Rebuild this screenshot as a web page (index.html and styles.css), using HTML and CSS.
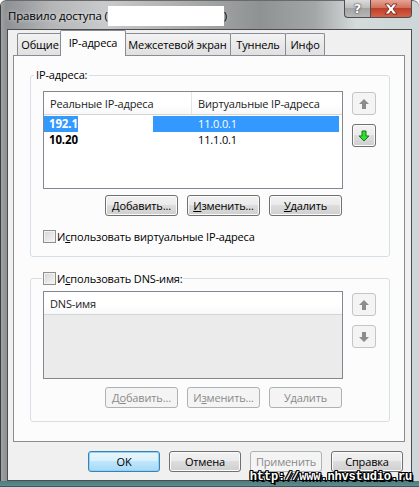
FILE: index.html
```html
<!DOCTYPE html>
<html lang="ru">
<head>
<meta charset="utf-8">
<title>Правило доступа</title>
<link rel="stylesheet" href="styles.css">
</head>
<body>
<div class="window">
  <div class="titlebar">
    <span class="title">Правило доступа (<span class="redact-title"></span>)</span>
    <div class="caption-btns">
      <span class="cap help">?</span>
      <span class="cap close"><svg width="16" height="12" viewBox="0 0 16 12"><path d="M2 1 H6 L8 4 L10 1 H14 L10 6 L14 11 H10 L8 8 L6 11 H2 L6 6 Z" fill="#fff" stroke="#6a1a10" stroke-width="0.8"/></svg></span>
    </div>
  </div>
  <div class="client">
    <div class="tabs">
      <span class="tab t1">Общие</span>
      <span class="tab t2 active">IP-адреса</span>
      <span class="tab t3">Межсетевой экран</span>
      <span class="tab t4">Туннель</span>
      <span class="tab t5">Инфо</span>
    </div>
    <div class="panel">
      <fieldset class="group g1">
        <legend class="legend">IP-адреса:</legend>
        <div class="list-row">
          <div class="listview lv1">
            <div class="lv-header"><span class="col c1">Реальные IP-адреса</span><span class="col c2">Виртуальные IP-адреса</span></div>
            <div class="lv-row selected"><span class="cell c1"><b>192.1</b><span class="redact"></span></span><span class="cell c2">11.0.0.1</span></div>
            <div class="lv-row"><span class="cell c1"><b>10.20</b></span><span class="cell c2">11.1.0.1</span></div>
          </div>
          <div class="arrows">
            <button class="arrow" disabled><svg width="12" height="12" viewBox="0 0 12 12"><path d="M6 1 L11 6 H8 V11 H4 V6 H1 Z" fill="#8c8c8c"/></svg></button>
            <button class="arrow"><svg width="12" height="12" viewBox="0 0 12 12"><path d="M4 1 H8 V6 H11 L6 11 L1 6 H4 Z" fill="#2fe02f" stroke="#157a15" stroke-width="1" stroke-linejoin="round"/></svg></button>
          </div>
        </div>
        <div class="btn-row">
          <button class="btn"><u>Д</u>обавить...</button>
          <button class="btn"><u>И</u>зменить...</button>
          <button class="btn"><u>У</u>далить</button>
        </div>
        <label class="check"><span class="box"></span><span>И<u>с</u>пользовать виртуальные IP-адреса</span></label>
      </fieldset>

      <fieldset class="group g2">
        <legend class="legend legend-check"><label class="check"><span class="box"></span><span>И<u>с</u>пользовать DNS-имя:</span></label></legend>
        <div class="list-row list-row2">
          <div class="listview lv2">
            <div class="lv-header"><span class="col">DNS-имя</span></div>
          </div>
          <div class="arrows arrows2">
            <button class="arrow" disabled><svg width="12" height="12" viewBox="0 0 12 12"><path d="M6 1 L11 6 H8 V11 H4 V6 H1 Z" fill="#8c8c8c"/></svg></button>
            <button class="arrow" disabled><svg width="12" height="12" viewBox="0 0 12 12"><path d="M4 1 H8 V6 H11 L6 11 L1 6 H4 Z" fill="#8c8c8c"/></svg></button>
          </div>
        </div>
        <div class="btn-row btn-row2">
          <button class="btn" disabled>Д<u>о</u>бавить...</button>
          <button class="btn" disabled>И<u>з</u>менить...</button>
          <button class="btn" disabled>У<u>д</u>алить</button>
        </div>
      </fieldset>
    </div>
    <div class="dialog-btns">
      <button class="btn dlg default">OK</button>
      <button class="btn dlg">Отмена</button>
      <button class="btn dlg" disabled>Применить</button>
      <button class="btn dlg">Справка</button>
    </div>
  </div>
  <div class="watermark">http://www.nhvstudio.ru</div>
</div>
</body>
</html>
```
FILE: styles.css
```css
html, body {
  margin: 0;
  padding: 0;
  background: #ffffff;
}

body {
  font-family: "Open Sans", "Noto Sans", sans-serif;
  font-size: 11px;
  letter-spacing: -0.15px;
  color: #000;
}

.window {
  position: relative;
  width: 419px;
  height: 487px;
  box-sizing: border-box;
  padding: 0 7px 6px 7px;
  display: flex;
  flex-direction: column;
  border-radius: 6px 6px 0 0;
  background:
    linear-gradient(to top, #2f5e60 0, #2f5e60 1px, #5d8c8e 1px, #4b7b7d 6px, transparent 6px),
    linear-gradient(90deg, #3c3c3c 0, #3c3c3c 1px, #9fa3a6 1px, #8d9194 6px, #b3b5b6 12%, #c9cacb 25%, #a9abac 45%, #8f9293 62%, #a3a6a7 75%, #d5dadb 85%, #cdd6d8 100%);
  box-shadow: inset 0 1px 0 #6a6a6a;
}

.titlebar {
  height: 29px;
  display: flex;
  align-items: flex-start;
  flex: none;
}

.title {
  margin: 6px 0 0 1px;
  font-size: 11.5px;
  line-height: 19px;
  color: #000;
  text-shadow: 0 0 4px rgba(255, 255, 255, 0.8);
  white-space: nowrap;
}

.redact-title {
  display: inline-block;
  width: 116px;
  height: 20px;
  background: #fff;
  vertical-align: top;
}

.caption-btns {
  margin-left: auto;
  display: flex;
}

.cap {
  box-sizing: border-box;
  height: 18px;
  display: flex;
  align-items: center;
  justify-content: center;
  border: 1px solid #4d4d4d;
  border-top: none;
}

.help {
  width: 26px;
  border-right: none;
  border-radius: 0 0 0 4px;
  background: linear-gradient(#dcdcdc, #bdbdbd 45%, #a4a4a4 50%, #b7b7b7);
  color: #fff;
  font: bold 13px "DejaVu Sans", sans-serif;
  text-shadow: 0 0 2px #333, 0 0 1px #333;
}

.close {
  width: 42px;
  border-radius: 0 0 4px 0;
  background: linear-gradient(#e6a596, #d1705d 45%, #bf3f28 50%, #d4624a);
}

.client {
  flex: 1;
  box-sizing: border-box;
  border: 1px solid #4c4c4c;
  background: #f0f0f0;
  display: flex;
  flex-direction: column;
}

.tabs {
  display: flex;
  align-items: flex-end;
  height: 25px;
  margin-left: 9px;
  flex: none;
}

.tab {
  box-sizing: border-box;
  height: 22px;
  border: 1px solid #898c95;
  border-bottom: none;
  margin-right: -1px;
  background: linear-gradient(#f3f3f3, #e9e9e9 50%, #e0e0e0);
  display: flex;
  align-items: center;
  justify-content: center;
  white-space: nowrap;
  border-radius: 2px 2px 0 0;
}

.tab.active {
  position: relative;
  z-index: 1;
  height: 26px;
  margin: 0 -2px -1px -2px;
  background: #fcfcfc;
  padding-bottom: 3px;
}

.t1 { width: 46px; }
.t2 { width: 66px; }
.t3 { width: 107px; }
.t4 { width: 56px; }
.t5 { width: 40px; }

.panel {
  box-sizing: border-box;
  height: 387px;
  margin: 0 6px 0 5px;
  border: 1px solid #898c95;
  background: #fcfcfc;
  padding: 12px 14px 0 16px;
  flex: none;
}

.group {
  margin: 0;
  padding: 0 0 13px 0;
  border: 1px solid #d5dfe5;
  border-radius: 3px;
  min-width: 0;
}

.g2 {
  margin-top: 14px;
}

.legend {
  margin-left: 3px;
  padding: 0 2px;
  line-height: 14px;
  height: 14px;
}

.legend-check {
  margin-left: 11px;
  padding: 0 1px;
}

.list-row {
  display: flex;
  gap: 9px;
  margin: 9px 0 0 12px;
}

.list-row2 {
  margin-top: 6px;
}

.listview {
  box-sizing: border-box;
  width: 300px;
  border: 1px solid #828790;
  background: #fff;
}

.lv1 { height: 98px; }
.lv2 { height: 88px; background: #ebebeb; }

.lv-header {
  height: 22px;
  display: flex;
  background: linear-gradient(#ffffff 0, #ffffff 55%, #f7f8f9 100%);
  border-bottom: 1px solid #d5d5d5;
  color: #222;
}

.col {
  box-sizing: border-box;
  display: flex;
  align-items: center;
  padding-left: 6px;
}

.col.c1 {
  width: 148px;
  border-right: 1px solid #e3e5e7;
}

.lv-row {
  display: flex;
  height: 16px;
  line-height: 16px;
  margin-top: 1px;
  margin-right: 3px;
}

.lv-row + .lv-row {
  margin-top: 0;
}

.lv-row.selected {
  background: #3399ff;
  color: #fff;
}

.cell {
  box-sizing: border-box;
  padding-left: 5px;
  white-space: nowrap;
}

.cell b {
  font-size: 11.5px;
}

.cell.c1 {
  width: 148px;
  display: flex;
}

.cell.c2 {
  padding-left: 6px;
}

.redact {
  display: inline-block;
  width: 75px;
  height: 16px;
  background: #fff;
}

.arrows {
  display: flex;
  flex-direction: column;
  gap: 9px;
  margin-top: 1px;
}

.arrows2 {
  margin-top: 2px;
}

.arrow {
  box-sizing: border-box;
  width: 24px;
  height: 23px;
  padding: 0;
  border: 1px solid #707070;
  border-radius: 3px;
  background: linear-gradient(#f2f2f2, #ebebeb 45%, #dddddd 50%, #cfcfcf);
  box-shadow: inset 0 0 0 1px #fbfbfb;
  display: flex;
  align-items: center;
  justify-content: center;
}

.arrow:disabled {
  border-color: #c3c6c9;
  background: #f4f4f4;
  box-shadow: none;
}

.btn-row {
  display: flex;
  justify-content: flex-end;
  gap: 9px;
  width: 300px;
  box-sizing: border-box;
  padding-right: 1px;
  margin: 6px 0 0 12px;
}

.btn-row2 {
  margin-top: 8px;
}

.btn {
  box-sizing: border-box;
  width: 73px;
  height: 21px;
  padding: 0;
  font-family: inherit;
  font-size: 11px;
  letter-spacing: -0.15px;
  color: #000;
  border: 1px solid #707070;
  border-radius: 3px;
  background: linear-gradient(#f2f2f2, #ebebeb 45%, #dddddd 50%, #cfcfcf);
  box-shadow: inset 0 0 0 1px #fbfbfb;
}

.btn:disabled {
  color: #8a8a8a;
  border-color: #adb2b5;
  background: #f4f4f4;
  box-shadow: none;
}

.btn u {
  text-underline-offset: 1px;
}

.check {
  display: flex;
  align-items: center;
  gap: 1px;
  height: 13px;
  line-height: 13px;
  margin: 14px 0 0 12px;
  white-space: nowrap;
}

.legend-check .check {
  margin: 0;
  height: 14px;
}

.box {
  box-sizing: border-box;
  width: 13px;
  height: 13px;
  border: 1px solid #8e8f8f;
  background: linear-gradient(135deg, #d4d4d4, #f7f7f7);
  box-shadow: inset 0 0 0 1px #f2f2f2;
  flex: none;
}

.dialog-btns {
  display: flex;
  justify-content: flex-end;
  gap: 9px;
  margin-top: 9px;
  padding-right: 8px;
}

.btn.dlg {
  width: 72px;
}

.btn.default {
  border-color: #3c7fb1;
  background: linear-gradient(#eaf6fd, #d9f0fc 45%, #bee6fd 50%, #a7d9f5);
  box-shadow: inset 0 0 0 1px #8fd3f5;
}

.watermark {
  position: absolute;
  right: 7px;
  bottom: 1px;
  font: bold 12px/18px "Liberation Mono", "DejaVu Sans Mono", monospace;
  color: #fff;
  text-shadow:
    1px 0 0 #000, -1px 0 0 #000, 0 1px 0 #000, 0 -1px 0 #000,
    1px 1px 0 #000, -1px -1px 0 #000, 1px -1px 0 #000, -1px 1px 0 #000,
    2px 2px 0 #000;
  white-space: nowrap;
}
```
